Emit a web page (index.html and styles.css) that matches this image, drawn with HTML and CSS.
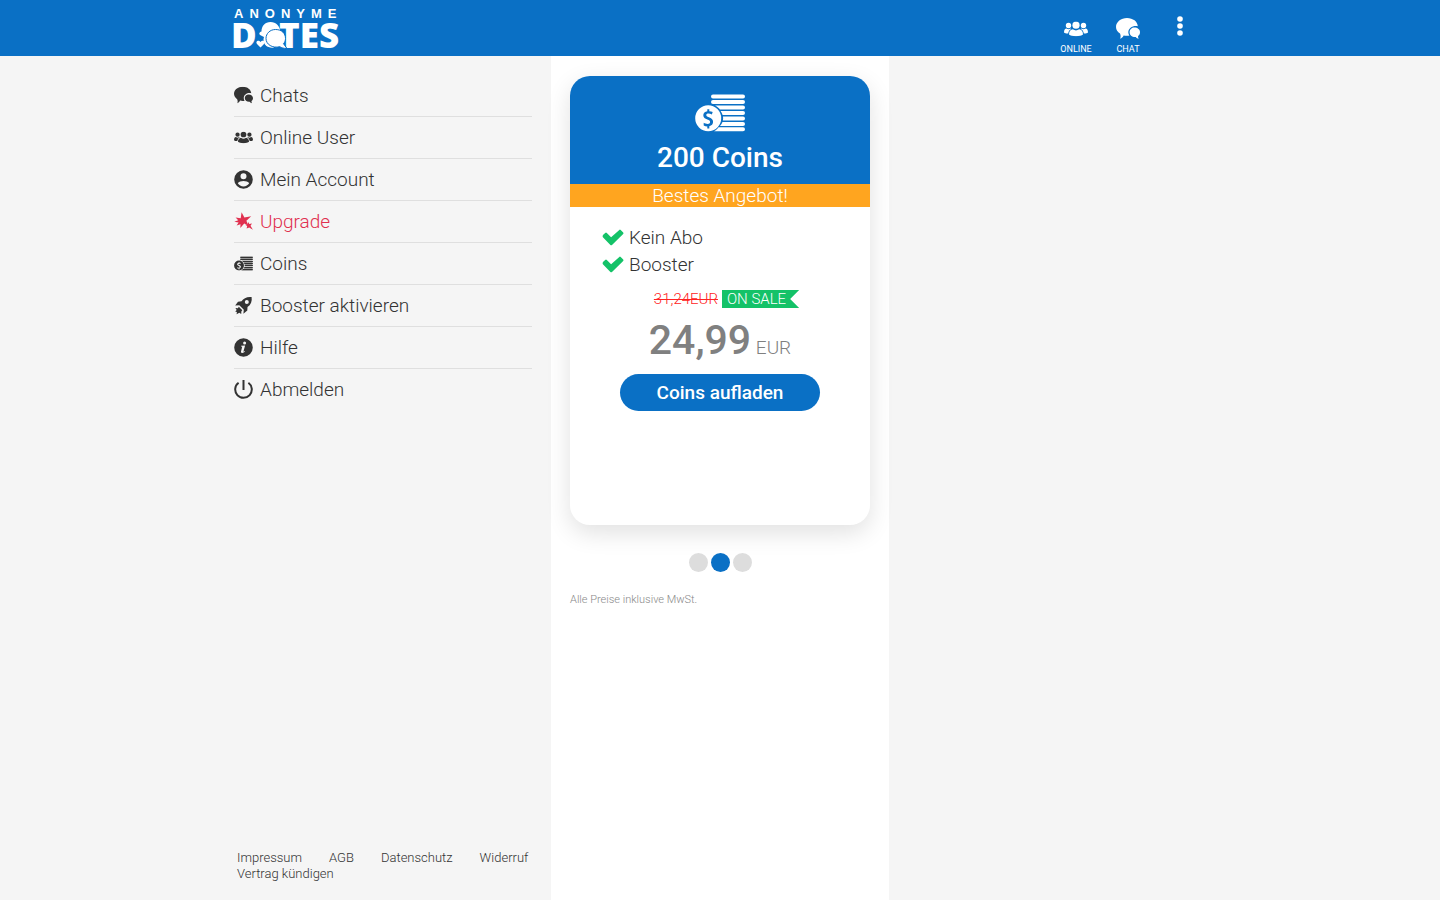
FILE: index.html
```html
<!DOCTYPE html>
<html lang="de">
<head>
<meta charset="utf-8">
<title>Anonyme Dates</title>
<link rel="stylesheet" href="styles.css">
</head>
<body>
<svg class="defs" aria-hidden="true">
  <symbol id="i-chat" viewBox="0 0 24 22">
    <path d="M11 0C17 0 21.500 3.600 21.800 8.200C17 7.200 12.300 10 12.300 14.200C12.300 15.500 12.700 16.600 13.400 17.600C11.600 18 9.500 17.900 7.600 17.400C7 19 5.500 20.300 4.200 20.700C4.900 19 4.700 17 4 15.600C1.600 14 0 11.600 0 8.900C0 4 5 0 11 0Z"/>
    <path d="M18.400 9.600C21.600 9.600 24 11.700 24 14.300C24 15.900 23.300 17.200 22.100 18C21.900 19 22.200 20 22.900 20.800C21.600 20.700 20.400 20 19.800 19C16.400 19.400 13.600 17.300 13.600 14.300C13.600 11.700 15.800 9.600 18.400 9.600Z"/>
  </symbol>
  <symbol id="i-users" viewBox="0 0 24 15">
    <circle cx="12" cy="3.700" r="3.600"/><circle cx="4.500" cy="4" r="2.700"/><circle cx="19.500" cy="4" r="2.700"/>
    <path d="M5 13C5 9.800 6.600 8.200 8.800 7.800C10.800 9.300 13.200 9.300 15.200 7.800C17.400 8.200 19 9.800 19 13C17 15.200 7 15.200 5 13Z"/>
    <path d="M0 11C0 8.400 1 7.200 2.500 7C3.800 7.900 5.200 7.900 6.500 7L7.200 7.400C5.400 8.300 4.500 9.700 4.200 12C2.600 12.100 1 11.900 0 11Z"/>
    <path d="M24 11C24 8.400 23 7.200 21.500 7C20.200 7.900 18.800 7.900 17.500 7L16.800 7.400C18.600 8.300 19.500 9.700 19.800 12C21.400 12.100 23 11.900 24 11Z"/>
  </symbol>
  <symbol id="i-coins" viewBox="0 0 50 38">
    <path d="M18 .5H48a1.600 1.600 0 0 1 0 4H18a2 2 0 0 1 0-4ZM18 6H48a1.600 1.600 0 0 1 0 4H18a2 2 0 0 1 0-4ZM20 11.500H48a1.600 1.600 0 0 1 0 4H25C23.600 13.700 22 12.400 20 11.500ZM25.600 17H48a1.600 1.600 0 0 1 0 4H27.600C27.200 19.500 26.500 18.200 25.600 17ZM28 22.400H48a1.600 1.600 0 0 1 0 4H27.900C28.200 25 28.200 23.800 28 22.400ZM27.500 27.900H48a1.600 1.600 0 0 1 0 4H25C26.200 30.700 27 29.400 27.500 27.900ZM23.500 33.300H48a1.600 1.600 0 0 1 0 4H19C21 36.300 22.300 35 23.500 33.300Z"/>
    <path fill-rule="evenodd" d="M13.200 11.300a13 13 0 1 1 0 26a13 13 0 1 1 0-26ZM12.300 15.300V17.300C9.900 17.600 8.300 19 8.300 21.200C8.300 23.500 10 24.500 12.300 25.400C14.400 26.200 15.100 26.600 15.100 28C15.100 29.200 14.200 29.900 12.700 29.900C11.200 29.900 9.900 29.400 8.700 28.700V31.400C9.700 32 11 32.300 12.300 32.400V34.500H14.300V32.200C16.700 31.700 18.100 30.100 18.100 27.800C18.100 25.200 16.300 24.200 13.900 23.200C12 22.400 11.300 22.100 11.300 21C11.300 20 12.100 19.500 13.400 19.500C14.600 19.500 15.800 19.900 16.800 20.400L17.700 18C16.700 17.600 15.600 17.300 14.300 17.200V15.300Z"/>
  </symbol>
  <symbol id="i-check" viewBox="0 0 22 17"><path d="M1.200 5.800L3.200 3.900Q4 3.200 4.800 3.900L9.100 8.200L17.300 .9Q18 .3 18.700 1L21.200 3.500Q21.800 4.200 21.200 4.900L10 16Q9.200 16.700 8.400 16L.9 8.200Q0 7 1.200 5.800Z"/></symbol>
</svg>

<header class="topbar">
  <div class="topbar-inner">
    <a class="logo" href="#" aria-label="Anonyme Dates">
      <svg class="logo-art" width="108" height="52" viewBox="0 0 108 52">
        <text class="logo-small" x="0" y="18">ANONYME</text>
        <text class="logo-big" x="-3" y="48">D</text>
        <text class="logo-big" x="45" y="48">TES</text>
        <path d="M27 35.500C24.500 34.500 25 32 27.500 31.500C27.500 26 31 22 36.500 22C42 22 46 26 46.500 32L42 40L30 37Z"/>
        <path d="M29.500 40C29.500 36 32 33 35 33L40 47.500C34 48.500 29.500 45 29.500 40Z"/>
        <path class="logo-gap" d="M41.500 29.500C48 29.500 51.500 33.500 51.500 38.500C51.500 40.500 50.800 42.300 49.500 43.700L53 48.500C49.800 48.500 47.500 47.900 45.800 46.700C38.500 48.500 32 44.500 32 38.500C32 33.500 36 29.500 41.500 29.500Z"/>
        <path d="M26.500 47.500L23 44C21 41 24.800 39.500 26.500 42C28.200 39.500 32 41 30 44Z"/>
      </svg>
    </a>
    <nav class="quick" aria-label="Schnellzugriff">
      <a class="quick-link" href="#"><svg class="quick-icon" viewBox="0 0 24 15"><use href="#i-users"/></svg>ONLINE</a>
      <a class="quick-link" href="#"><svg class="quick-icon" viewBox="0 0 24 22"><use href="#i-chat"/></svg>CHAT</a>
      <button class="more" type="button" aria-label="Menü"><svg width="6" height="20" viewBox="0 0 6 20"><circle cx="3" cy="3" r="2.800"/><circle cx="3" cy="10" r="2.800"/><circle cx="3" cy="17" r="2.800"/></svg></button>
    </nav>
  </div>
</header>

<div class="page">
  <aside class="sidebar">
    <nav class="menu" aria-label="Hauptmenü">
      <a class="menu-item" href="#"><svg class="menu-icon" viewBox="0 0 24 22"><use href="#i-chat"/></svg>Chats</a>
      <a class="menu-item" href="#"><svg class="menu-icon" viewBox="0 0 24 15"><use href="#i-users"/></svg>Online User</a>
      <a class="menu-item" href="#"><svg class="menu-icon" viewBox="0 0 19 19"><path fill-rule="evenodd" d="M9.500 .2a9.300 9.300 0 1 1 0 18.600a9.300 9.300 0 1 1 0-18.600ZM9.500 3.200a3 3 0 1 0 0 6a3 3 0 1 0 0-6ZM3.800 13.200C5 15.200 7.100 16.400 9.500 16.400C11.900 16.400 14 15.200 15.200 13.200C14.500 11.600 11.600 10.900 9.500 10.900C7.400 10.900 4.500 11.600 3.800 13.200Z"/></svg>Mein Account</a>
      <a class="menu-item menu-item-hot" href="#"><svg class="menu-icon" viewBox="0 0 19 19"><path d="M7.600 .3L10.400 5.400L17.200 4.200L12.400 8.700L14.400 13.600L10.200 11.600L6.300 16L6.500 12.300L2.600 13.600L4.600 10.600L.3 9.800L4.200 8.300L1.600 5.600L6.700 6.200Z"/><path d="M14.200 10L15.300 12L18 11.600L16.500 13.700L18.900 17.800L15.200 15.600L12.600 16.600L13.200 14L11.200 12.700L13.700 12.300Z"/></svg>Upgrade</a>
      <a class="menu-item" href="#"><svg class="menu-icon" viewBox="0 0 50 38"><use href="#i-coins"/></svg>Coins</a>
      <a class="menu-item" href="#"><svg class="menu-icon" viewBox="0 0 19 19"><path fill-rule="evenodd" d="M17.600 1C13 .4 9.600 2.300 7.500 5.300L4 5.700L1.200 9.500L5.300 9.300L9.800 13.700L9.400 17.700L13.300 14.600L13.500 11.100C16.900 8.900 18.300 5.400 17.600 1ZM12.800 4a2 2 0 1 1 0 4a2 2 0 1 1 0-4Z"/><path d="M4.800 10.700L8.300 14.200L7.400 15.300L7.200 18L5.300 16.800L2.600 18.200L2.900 15.900L1.200 15.500L2.700 14L1.400 12L3.900 12.200Z"/></svg>Booster aktivieren</a>
      <a class="menu-item" href="#"><svg class="menu-icon" viewBox="0 0 19 19"><path fill-rule="evenodd" d="M9.500 .2a9.300 9.300 0 1 1 0 18.600a9.300 9.300 0 1 1 0-18.600ZM10.600 3.600a1.500 1.500 0 1 0 0 3a1.500 1.500 0 1 0 0-3ZM7.100 7.700V8.600L8.200 8.800L7 13.500C6.700 15.300 9.300 15.600 11 13.600L10.600 13.100C9.800 13.900 9.300 13.800 9.500 13.200L11.100 7.500Z"/></svg>Hilfe</a>
      <a class="menu-item" href="#"><svg class="menu-icon" viewBox="0 0 19 19"><path class="power" d="M4.600 2.800A8.300 8.300 0 1 0 14.400 2.800M9.500 0V10"/></svg>Abmelden</a>
    </nav>
    <footer class="legal">
      <a href="#">Impressum</a><a href="#">AGB</a><a href="#">Datenschutz</a><a href="#">Widerruf</a><a href="#">Vertrag kündigen</a>
    </footer>
  </aside>

  <main class="content">
    <article class="offer">
      <header class="offer-head">
        <svg class="offer-icon" viewBox="0 0 50 38"><use href="#i-coins"/></svg>
        <h1 class="offer-title">200 Coins</h1>
      </header>
      <p class="offer-banner">Bestes Angebot!</p>
      <ul class="perks">
        <li><svg class="check" viewBox="0 0 22 17"><use href="#i-check"/></svg>Kein Abo</li>
        <li><svg class="check" viewBox="0 0 22 17"><use href="#i-check"/></svg>Booster</li>
      </ul>
      <p class="sale"><s>31,24EUR</s><span class="tag">ON SALE</span></p>
      <p class="price"><strong>24,99</strong> EUR</p>
      <button class="buy" type="button">Coins aufladen</button>
    </article>
    <div class="dots">
      <button class="dot" type="button" aria-label="Angebot 1"></button>
      <button class="dot dot-active" type="button" aria-label="Angebot 2"></button>
      <button class="dot" type="button" aria-label="Angebot 3"></button>
    </div>
    <p class="note">Alle Preise inklusive MwSt.</p>
  </main>
</div>
</body>
</html>
```

FILE: styles.css
```css
* { box-sizing: border-box; }
body {
  margin: 0;
  min-height: 100vh;
  display: flex;
  flex-direction: column;
  background: #f5f5f5;
  color: #333;
  font-family: Roboto, sans-serif;
  font-weight: 300;
}
a { color: inherit; text-decoration: none; }
p, ul, h1 { margin: 0; padding: 0; }
button { border: 0; padding: 0; font-family: inherit; cursor: pointer; }
svg { display: block; fill: currentColor; }
.defs { position: absolute; width: 0; height: 0; }

.topbar { background: #0a70c5; color: #fff; }
.topbar-inner {
  max-width: 972px;
  height: 56px;
  margin: 0 auto;
  display: flex;
  justify-content: space-between;
}
.logo-art { overflow: visible; }
.logo-small { font: 700 13px "Liberation Sans", sans-serif; letter-spacing: 6px; }
.logo-big { font: 800 35px "Open Sans", sans-serif; }
.logo-gap { stroke: #0a70c5; stroke-width: 1; }
.quick { display: flex; padding-right: 23px; }
.quick-link {
  width: 52px;
  padding-top: 17px;
  display: flex;
  flex-direction: column;
  align-items: center;
  font-size: 9px;
  font-weight: 400;
  line-height: 12px;
}
.quick-icon { width: 24px; height: 24px; margin-bottom: 2px; }
.more {
  width: 6px;
  margin-left: 23px;
  padding-top: 16px;
  display: flex;
  background: none;
  color: #fff;
}

.page {
  flex: 1;
  width: 100%;
  max-width: 972px;
  margin: 0 auto;
  display: grid;
  grid-template-columns: 1fr 338px 1fr;
}
.sidebar {
  padding: 19px 19px 18px 0;
  display: flex;
  flex-direction: column;
  justify-content: space-between;
}
.menu-item {
  height: 42px;
  padding-bottom: 1px;
  display: flex;
  align-items: center;
  gap: 7px;
  border-bottom: 1px solid #dfdfdf;
  font-size: 19px;
}
.menu-item:last-child { border-bottom-color: transparent; }
.menu-item-hot { color: #e0304f; }
.menu-icon { width: 19px; height: 19px; }
.power { fill: none; stroke: currentColor; stroke-width: 2; }
.legal {
  padding-left: 3px;
  display: flex;
  flex-wrap: wrap;
  column-gap: 27px;
  font-size: 13px;
  line-height: 16px;
}

.content { padding: 20px 19px; background: #fff; }
.offer {
  min-height: 449px;
  border-radius: 20px;
  overflow: hidden;
  box-shadow: 0 8px 24px rgba(0, 0, 0, .12);
  text-align: center;
}
.offer-head {
  height: 108px;
  padding-top: 18px;
  background: #0a70c5;
  color: #fff;
}
.offer-icon { width: 50px; height: 38px; margin: 0 auto 9px; }
.offer-title { font-size: 28px; font-weight: 500; line-height: 34px; }
.offer-banner { background: #ffa51f; color: #fff; font-size: 19px; line-height: 23px; }
.perks {
  padding: 17px 32px 0;
  list-style: none;
  font-size: 19px;
  line-height: 27px;
}
.perks li { display: flex; align-items: center; gap: 5px; }
.check { width: 22px; height: 17px; color: #14c268; }
.sale {
  margin-top: 12px;
  padding-left: 13px;
  display: flex;
  justify-content: center;
  gap: 4px;
  font-size: 15px;
  line-height: 18px;
}
.sale s { color: #f22; }
.tag {
  padding: 0 13px 0 5px;
  background: #14c268;
  color: #fff;
  clip-path: polygon(0 0, 100% 0, calc(100% - 9px) 50%, 100% 100%, 0 100%);
}
.price { margin-top: 7px; color: #808080; font-size: 19px; line-height: 50px; }
.price strong { font-size: 41px; font-weight: 500; }
.buy {
  width: 200px;
  height: 37px;
  margin-top: 1px;
  border-radius: 20px;
  background: #0a70c5;
  color: #fff;
  font-size: 19px;
  font-weight: 500;
}
.dots { margin-top: 28px; display: flex; justify-content: center; gap: 3px; }
.dot { width: 19px; height: 19px; border-radius: 50%; background: #ddd; }
.dot-active { background: #0a70c5; }
.note { margin-top: 21px; color: #888; font-size: 11px; line-height: 14px; }
```
